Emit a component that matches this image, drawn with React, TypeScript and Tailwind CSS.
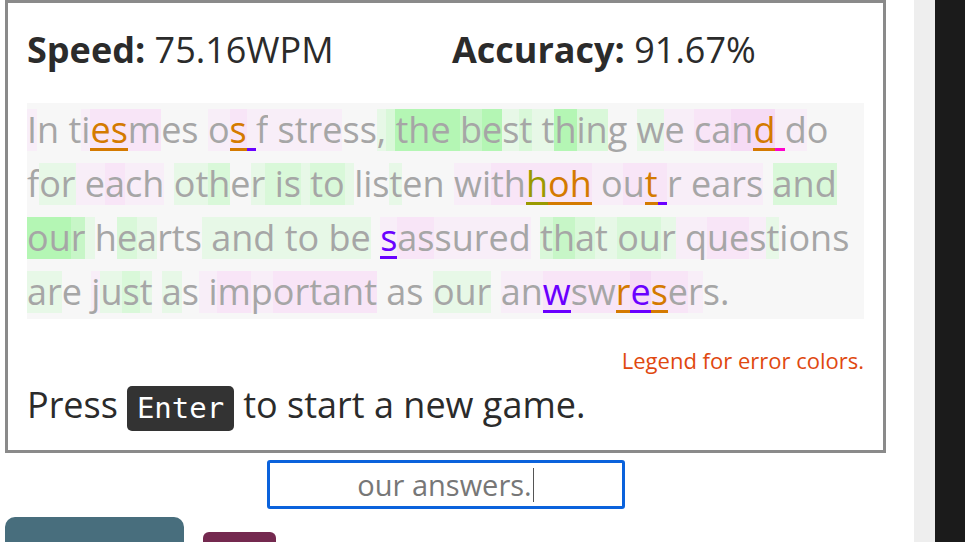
import React from "react";

type Line = { text: string; bg: string; err: [number, string][] };

const LINES: Line[] = [
  {
    text: "In tiesmes os f stress, the best thing we cand do",
    bg: "p...pqqq...pqppppppp..abddddcdabaadbb..appqqrrpp",
    err: [[5, "O"], [6, "O"], [12, "O"], [13, "u"], [45, "O"], [46, "m"]],
  },
  {
    text: "for each other is to listen withhoh out r ears and",
    bg: ".aappqpp" + ".aab" + ".abbbabba" + "..." + "a" + "..." + "ppqqqqq" + "ppqqq" + "pppppp" + "." + "bbb",
    err: [[32, "Y"], [33, "O"], [34, "O"], [38, "O"], [39, "u"]],
  },
  {
    text: "our hearts and to be sassured that our questions",
    bg: "ddca.ba...aaaaaaaaaa.pqqppppp.bcbaabbappqqpa....",
    err: [[21, "P"]],
  },
  {
    text: "are just as important as our anwswresers.",
    bg: "aa..paba.a.ppqpqqqqqq....aaa.ppqqqqrqqp..",
    err: [[31, "P"], [34, "O"], [35, "P"], [36, "O"]],
  },
];

const BG: Record<string, string> = {
  ".": "",
  a: "bg-[#e7f8e7]",
  b: "bg-[#d9f8d9]",
  c: "bg-[#c7f6c7]",
  d: "bg-[#b4f6b4]",
  p: "bg-[#f8eef8]",
  q: "bg-[#f8e5f7]",
  r: "bg-[#f6dbf5]",
};

const ERR: Record<string, string> = {
  O: "text-[#d47a00] shadow-[inset_0_-3px_0_#d47a00]",
  P: "text-[#6a00ff] shadow-[inset_0_-3px_0_#6a00ff]",
  Y: "text-[#9a9a00] shadow-[inset_0_-3px_0_#9a9a00]",
  u: "shadow-[inset_0_-3px_0_#6a00ff]",
  m: "shadow-[inset_0_-3px_0_#ff00cc]",
};

function TextLine({ line }: { line: Line }) {
  const errMap = new Map(line.err);
  return (
    <div className="flex h-[54px] items-center">
      {line.text.split("").map((ch, i) => {
        const code = line.bg[i] ?? ".";
        const e = errMap.get(i);
        return (
          <span
            key={i}
            className={`h-[42px] leading-[42px] whitespace-pre ${BG[code] ?? ""} ${e ? ERR[e] : ""}`}
          >
            {ch}
          </span>
        );
      })}
    </div>
  );
}

export default function App() {
  return (
    <div className="flex h-[542px] w-[965px] overflow-hidden bg-white font-['Open_Sans',sans-serif]">
      <div className="flex w-[914px] shrink-0 flex-col">
        <div className="ml-[5px] flex h-[453px] w-[881px] shrink-0 flex-col border-[3px] border-[#8a8a8a] px-[19px]">
          <div className="mt-[23px] flex h-[48px] shrink-0 items-center text-[36px] leading-[48px] text-[#2b2b2b]">
            <div className="w-[425px]">
              <span className="font-bold">Speed:</span> 75.16WPM
            </div>
            <div>
              <span className="font-bold">Accuracy:</span> 91.67%
            </div>
          </div>
          <div className="mt-[29px] shrink-0 bg-[#f7f7f7] text-[36px] text-[#a6a6a6]">
            {LINES.map((l, i) => (
              <TextLine key={i} line={l} />
            ))}
          </div>
          <div className="mt-[27px] shrink-0 text-right text-[22px] leading-[28px] text-[#e0480f]">
            Legend for error colors.
          </div>
          <div className="mt-[6px] flex h-[50px] shrink-0 items-baseline text-[36px] leading-[50px] text-[#2b2b2b]">
            <span>Press</span>
            <span className="mx-[9px] flex h-[45px] items-center rounded-[5px] bg-[#333333] px-[10px] font-['DejaVu_Sans_Mono',monospace] text-[29px] leading-[45px] text-white">
              Enter
            </span>
            <span>to start a new game.</span>
          </div>
        </div>
        <div className="flex w-[891px] shrink-0 justify-center">
          <div className="mt-[7px] flex h-[49px] w-[358px] items-center justify-center rounded-[3px] border-[3px] border-[#0a62dc] text-[29px] text-[#777777]">
            <span>our answers.</span>
            <span className="ml-[1px] h-[34px] w-[1px] bg-[#555555]" />
          </div>
        </div>
        <div className="flex shrink-0 items-start">
          <div className="ml-[5px] mt-[8px] h-[60px] w-[179px] rounded-[10px] bg-[#486e7d]" />
          <div className="ml-[19px] mt-[23px] h-[40px] w-[73px] rounded-[6px] bg-[#74294f]" />
        </div>
      </div>
      <div className="w-[21px] shrink-0 bg-[#eeeeee]" />
      <div className="flex-1 bg-[#1b1b1b]" />
    </div>
  );
}
